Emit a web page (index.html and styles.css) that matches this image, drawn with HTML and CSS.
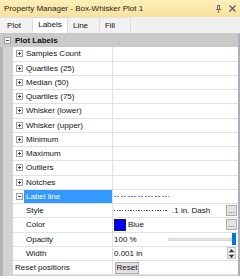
FILE: index.html
```html
<!DOCTYPE html>
<html lang="en">
<head>
    <meta charset="UTF-8">
    <title>Property Manager</title>
    <link rel="stylesheet" href="styles.css">
</head>
<body>
    <div class="panel">
        <div class="titlebar">
            <span class="title">Property Manager - Box-Whisker Plot 1</span>
            <span class="tools">
                <svg class="pin" width="7" height="8" viewBox="0 0 7 8">
                    <path d="M2 0.5h3M2.5 0.5v4M4.5 0.5v4M1 4.5h5M3.5 4.5v3.5" stroke="#6d6d6d" stroke-width="1" fill="none"/>
                </svg>
                <svg class="close" width="7" height="7" viewBox="0 0 7 7">
                    <path d="M0.5 0.5l6 6M6.5 0.5l-6 6" stroke="#5a5a5a" stroke-width="1.2" fill="none"/>
                </svg>
            </span>
        </div>

        <div class="tabs">
            <div class="tab t-plot">Plot</div>
            <div class="tab t-labels active">Labels</div>
            <div class="tab t-line">Line</div>
            <div class="tab t-fill">Fill</div>
        </div>

        <div class="grid">
            <div class="cat"><span class="box minus"></span>Plot Labels</div>
            <div class="rows">
                <div class="row"><div class="name"><span class="box plus"></span>Samples Count</div><div class="val"></div></div>
                <div class="row"><div class="name"><span class="box plus"></span>Quartiles (25)</div><div class="val"></div></div>
                <div class="row"><div class="name"><span class="box plus"></span>Median (50)</div><div class="val"></div></div>
                <div class="row"><div class="name"><span class="box plus"></span>Quartiles (75)</div><div class="val"></div></div>
                <div class="row"><div class="name"><span class="box plus"></span>Whisker (lower)</div><div class="val"></div></div>
                <div class="row"><div class="name"><span class="box plus"></span>Whisker (upper)</div><div class="val"></div></div>
                <div class="row"><div class="name"><span class="box plus"></span>Minimum</div><div class="val"></div></div>
                <div class="row"><div class="name"><span class="box plus"></span>Maximum</div><div class="val"></div></div>
                <div class="row"><div class="name"><span class="box plus"></span>Outliers</div><div class="val"></div></div>
                <div class="row"><div class="name"><span class="box plus"></span>Notches</div><div class="val"></div></div>
                <div class="row">
                    <div class="name"><span class="box minus"></span><span class="selected">Label line</span></div>
                    <div class="val"><span class="line-blue"></span></div>
                </div>
                <div class="row">
                    <div class="name sub">Style</div>
                    <div class="val"><span class="line-dash"></span><span class="dash-text">.1 in. Dash</span><span class="btn-dots">...</span></div>
                </div>
                <div class="row">
                    <div class="name sub">Color</div>
                    <div class="val"><span class="swatch"></span><span>Blue</span><span class="btn-dots">...</span></div>
                </div>
                <div class="row">
                    <div class="name sub">Opacity</div>
                    <div class="val"><span class="pct">100 %</span><span class="track"></span><span class="thumb"></span></div>
                </div>
                <div class="row">
                    <div class="name sub">Width</div>
                    <div class="val"><span>0.001 in</span>
                        <span class="spin">
                            <span class="spin-btn"><svg width="5" height="3" viewBox="0 0 5 3"><path d="M2.5 0L5 3H0z" fill="#333"/></svg></span>
                            <span class="spin-btn"><svg width="5" height="3" viewBox="0 0 5 3"><path d="M0 0h5L2.5 3z" fill="#333"/></svg></span>
                        </span>
                    </div>
                </div>
                <div class="row">
                    <div class="name top">Reset positions</div>
                    <div class="val"><span class="btn-reset">Reset</span></div>
                </div>
            </div>
        </div>
    </div>
</body>
</html>
```

FILE: styles.css
```css
body {
    margin: 0;
    background: #fff;
    font-family: "Liberation Sans", Arial, sans-serif;
    font-size: 8px;
    color: #111;
}

.panel {
    width: 240px;
    height: 279px;
    display: flex;
    flex-direction: column;
    overflow: hidden;
}

.titlebar {
    height: 17px;
    flex: none;
    display: flex;
    align-items: center;
    justify-content: space-between;
    padding: 0 4px;
    background: linear-gradient(#fdefb9, #f8e19c);
    color: #1e1e1e;
}

.tools {
    display: flex;
    align-items: center;
    gap: 7px;
}

.tools svg {
    display: block;
}

.tabs {
    height: 16px;
    flex: none;
    display: flex;
    background: #f0f0f0;
}

.tab {
    box-sizing: border-box;
    height: 16px;
    padding-top: 3px;
    text-align: center;
    border-right: 1px solid #dcdcdc;
    border-top: 1px solid #e2e2e2;
    background: #f2f2f2;
}

.t-plot { width: 33px; padding-right: 4px; }
.t-labels { width: 35px; }
.t-line { width: 32px; padding-right: 6px; }
.t-fill { width: 31px; padding-right: 10px; }

.tab.active {
    background: #fff;
    border-top: 1px solid #d8d8d8;
    padding-top: 2px;
}

.grid {
    height: 243px;
    flex: none;
    display: flex;
    flex-direction: column;
    border-right: 2px solid #aab1bd;
    background: #d3d3d3;
}

.cat {
    height: 14.25px;
    flex: none;
    display: flex;
    align-items: center;
    padding-left: 4px;
    background: #c9c9c9;
    font-weight: bold;
}

.cat .box {
    margin-right: 4px;
}

.rows {
    flex: 1;
    display: flex;
    flex-direction: column;
    padding-left: 10px;
    border-left: 3px solid #b3b3b3;
}

.row {
    height: 14.25px;
    flex: none;
    box-sizing: border-box;
    display: flex;
    background: #fff;
    border-bottom: 1px solid #e1e1e1;
}

.name {
    width: 100px;
    flex: none;
    box-sizing: border-box;
    display: flex;
    align-items: center;
    padding-left: 3px;
    border-right: 1px solid #e1e1e1;
    white-space: nowrap;
}

.name .box {
    margin-right: 3px;
}

.name.sub {
    padding-left: 13px;
}

.name.top {
    padding-left: 2px;
}

.selected {
    align-self: stretch;
    flex: 1;
    display: flex;
    align-items: center;
    margin-left: -2px;
    padding-left: 2px;
    background: #3399ff;
    color: #fff;
}

.val {
    flex: 1;
    display: flex;
    align-items: center;
    padding-left: 1px;
    white-space: nowrap;
}

/* expand / collapse boxes */
.box {
    width: 5px;
    height: 5px;
    flex: none;
    border: 1px solid #a0a0a0;
    background: #f7f7f7;
    position: relative;
}

.box::before {
    content: "";
    position: absolute;
    left: 1px;
    top: 2px;
    width: 3px;
    height: 1px;
    background: #444;
}

.box.plus::after {
    content: "";
    position: absolute;
    left: 2px;
    top: 1px;
    width: 1px;
    height: 3px;
    background: #444;
}

.line-blue {
    width: 55px;
    height: 1px;
    background: repeating-linear-gradient(90deg, #6f6ff0 0 2px, transparent 2px 3.4px);
}

.line-dash {
    width: 54px;
    height: 1px;
    background: repeating-linear-gradient(90deg, #555 0 1.3px, transparent 1.3px 2.7px);
}

.dash-text {
    margin-left: 4px;
}

.btn-dots {
    box-sizing: border-box;
    width: 11px;
    height: 11px;
    margin-left: auto;
    margin-right: 1px;
    border: 1px solid #adadad;
    background: #e3e3e3;
    font-size: 7px;
    line-height: 9px;
    text-align: center;
}

.swatch {
    box-sizing: border-box;
    width: 12px;
    height: 12px;
    margin-right: 2px;
    border: 1px solid #1c1c40;
    background: #0000ff;
}

.pct {
    width: 54px;
}

.track {
    box-sizing: border-box;
    width: 64px;
    height: 3px;
    border: 1px solid #d6d6d6;
    background: #e9e9e9;
}

.thumb {
    width: 4px;
    height: 12px;
    background: #0078d7;
}

.spin {
    margin-left: auto;
    margin-right: 2px;
    display: flex;
    flex-direction: column;
    gap: 1px;
}

.spin-btn {
    box-sizing: border-box;
    width: 9px;
    height: 5.5px;
    display: flex;
    align-items: center;
    justify-content: center;
    border: 1px solid #c4c4c4;
    background: #ececec;
}

.spin-btn svg {
    display: block;
}

.btn-reset {
    box-sizing: border-box;
    width: 24px;
    height: 12px;
    margin-left: 1px;
    border: 1px solid #adadad;
    background: #e1e1e1;
    text-align: center;
    line-height: 10px;
}
```
